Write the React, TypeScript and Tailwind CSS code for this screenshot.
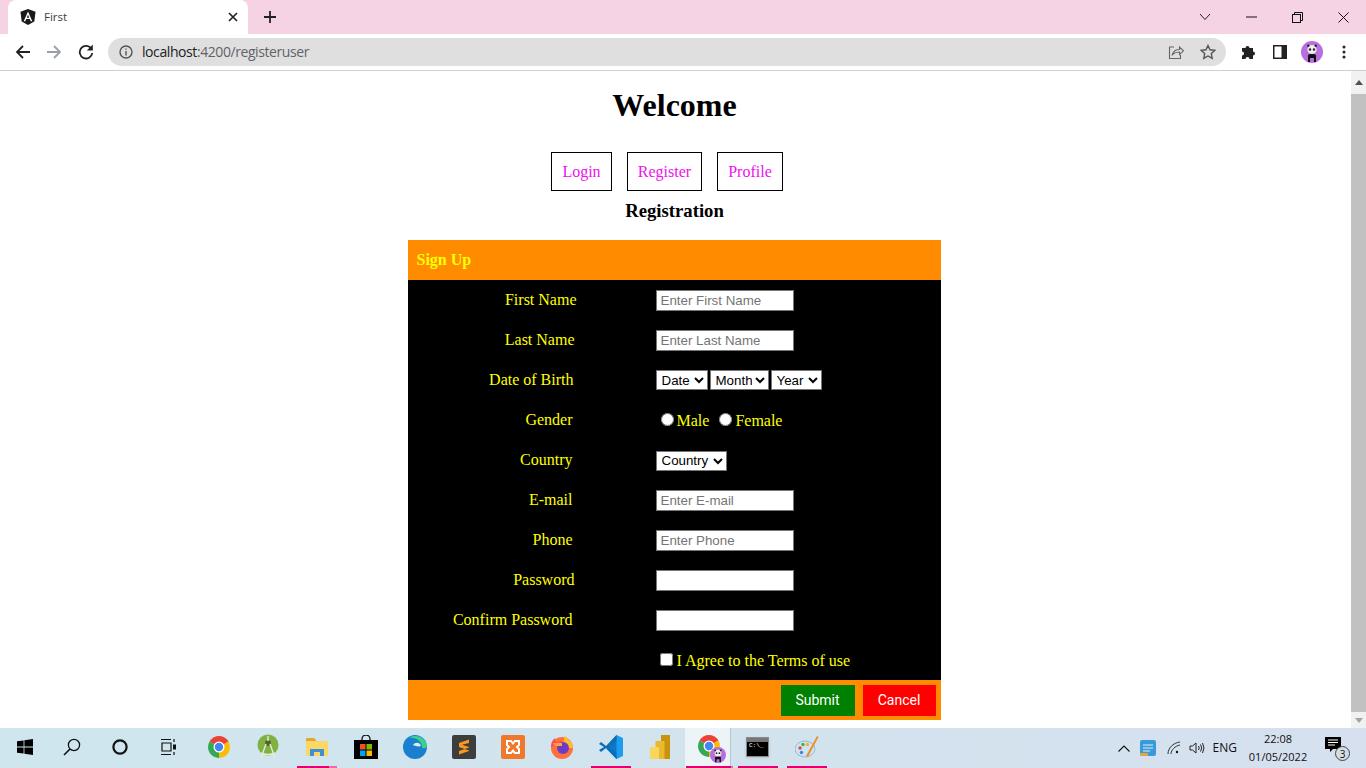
import React from 'react';

const ChromeLogo = ({ size = 24 }: { size?: number }) => (
  <svg width={size} height={size} viewBox="0 0 24 24">
    <path d="M12 12L2.5 6.5A11 11 0 0 1 21.5 6.5Z" fill="#ea4335" />
    <path d="M12 12L21.5 6.5A11 11 0 0 1 12 23Z" fill="#fbbc04" />
    <path d="M12 12L12 23A11 11 0 0 1 2.5 6.5Z" fill="#34a853" />
    <circle cx="12" cy="12" r="5.5" fill="#fff" />
    <circle cx="12" cy="12" r="4.2" fill="#4285f4" />
  </svg>
);

const Panda = ({ size = 22 }: { size?: number }) => (
  <svg width={size} height={size} viewBox="0 0 22 22">
    <circle cx="11" cy="11" r="11" fill="#b86ee0" />
    <path d="M7 21v-7q4-3 8 0v7h-2v-4h-4v4Z" fill="#111" />
    <circle cx="11" cy="8.5" r="4.6" fill="#eee" />
    <circle cx="9" cy="8.5" r="1.2" fill="#222" />
    <circle cx="13" cy="8.5" r="1.2" fill="#222" />
    <circle cx="7.2" cy="4.8" r="1.2" fill="#222" />
    <circle cx="14.8" cy="4.8" r="1.2" fill="#222" />
  </svg>
);

const taskbarApps: { icon: React.ReactNode; line?: string; active?: boolean; width?: string; shift?: string }[] = [
  {
    icon: (
      <svg width="16" height="16" viewBox="0 0 16 16" fill="#000">
        <path d="M0 2.3l6.6-.9v6.2H0ZM7.4 1.3L16 0v7.6H7.4ZM0 8.4h6.6v6.2L0 13.7ZM7.4 8.4H16V16l-8.6-1.3Z" />
      </svg>
    ),
    width: 'w-[47px] pl-[3px]',
  },
  {
    icon: (
      <svg width="18" height="18" viewBox="0 0 18 18" fill="none" stroke="#111" strokeWidth="1.3">
        <circle cx="11" cy="7" r="5.6" />
        <path d="M7 11l-6 6" strokeWidth="1.6" />
      </svg>
    ),
  },
  {
    icon: (
      <svg width="18" height="18" viewBox="0 0 18 18" fill="none" stroke="#111" strokeWidth="2.2">
        <circle cx="9" cy="9" r="6.6" />
      </svg>
    ),
    shift: 'pr-[2px]',
  },
  {
    icon: (
      <svg width="18" height="18" viewBox="0 0 18 18" fill="none" stroke="#111" strokeWidth="1.2">
        <path d="M1 1.500h10M1 16.500h10M2 5h9v8H2ZM14 1v3M14 14v3" />
        <rect x="13" y="6.500" width="3" height="5" fill="#111" stroke="none" />
      </svg>
    ),
    shift: 'pr-[2px]',
  },
  { icon: <ChromeLogo /> },
  {
    icon: (
      <svg width="24" height="26" viewBox="0 0 24 26">
        <circle cx="12" cy="11" r="10.500" fill="#7fb241" />
        <circle cx="12" cy="9" r="3" fill="#55632f" />
        <path d="M12 2v5M10 10L5 24M14 10l5 14M5 19q7 3 14 0" stroke="#e4ecd8" strokeWidth="1.400" fill="none" />
      </svg>
    ),
  },
  {
    icon: (
      <svg width="22" height="20" viewBox="0 0 22 20">
        <path d="M0 2a1 1 0 0 1 1-1h7l2 2v3H0Z" fill="#e3a72c" />
        <rect y="4" width="22" height="15" rx="1" fill="#fbd765" />
        <path d="M4 19v-7h14v7h-4v-4H8v4Z" fill="#3f8fd8" />
      </svg>
    ),
    line: 'w-[40px] bg-[linear-gradient(to_right,#e3006e_80%,#f06aa8_80%)]',
  },
  {
    icon: (
      <svg width="24" height="24" viewBox="0 0 24 24">
        <path d="M8 6V4a4 4 0 0 1 8 0v2" fill="none" stroke="#111" strokeWidth="1.300" />
        <rect y="5" width="24" height="19" fill="#000" />
        <rect x="6" y="9" width="5.500" height="5.500" fill="#f25022" />
        <rect x="12.500" y="9" width="5.500" height="5.500" fill="#7fba00" />
        <rect x="6" y="15.500" width="5.500" height="5.500" fill="#00a4ef" />
        <rect x="12.500" y="15.500" width="5.500" height="5.500" fill="#ffb900" />
      </svg>
    ),
  },
  {
    icon: (
      <svg width="24" height="24" viewBox="0 0 24 24">
        <circle cx="12" cy="12" r="12" fill="#1b7fd0" />
        <path d="M10 10c2-3 7-3 8 1-2 1-6 0-8-1Z" fill="#d7f0e4" />
        <path d="M6 3c6-4 15-2 18 7 0 2-1 4-5 3 1-7-7-11-13-10Z" fill="#3fd08a" />
      </svg>
    ),
  },
  {
    icon: (
      <svg width="24" height="24" viewBox="0 0 24 24">
        <rect width="24" height="24" rx="2" fill="#3d3d3d" />
        <path d="M17 4.500L7 8v4l10 3.500V12L10 9.800 17 8ZM7 12.500l10-.5M7 16l10-3.500V16L7 19.500Z" fill="#f79a1e" />
      </svg>
    ),
  },
  {
    icon: (
      <svg width="24" height="24" viewBox="0 0 24 24">
        <rect width="24" height="24" rx="2" fill="#f0782d" />
        <path d="M6 6h4l2 2.500L14 6h4v4l-2 2 2 2v4h-4l-2-2.500L10 18H6v-4l2-2-2-2Z" fill="none" stroke="#fff" strokeWidth="2" />
      </svg>
    ),
  },
  {
    icon: (
      <svg width="24" height="24" viewBox="0 0 24 24">
        <circle cx="12" cy="13" r="11" fill="#ff7139" />
        <path d="M15 0c1 4 8 6 8 13H12Z" fill="#ffbd2e" />
        <path d="M1 12C1 6 4 4 5 3l1 4 6-1-3 4Z" fill="#ff4f5e" />
        <circle cx="13" cy="13" r="6" fill="#6e3bc8" />
        <path d="M3 8h9v3H5Z" fill="#ffa436" />
      </svg>
    ),
  },
  {
    icon: (
      <svg width="24" height="24" viewBox="0 0 24 24">
        <path d="M17.500 0L24 3v18l-6.500 3L7 13.500l4-1.500Z" fill="#1f9cf0" />
        <path d="M17.500 0v24L7 12Z" fill="#0e78c4" />
        <path d="M2 7l-2 2 5 3-5 3 2 2 5-4 10.500 11V18L10 12l7.500-6V0L7 11Z" fill="#0a6fb8" />
      </svg>
    ),
    line: 'w-[40px] bg-[#e3006e]',
  },
  {
    icon: (
      <svg width="20" height="24" viewBox="0 0 20 24">
        <rect x="11" width="9" height="24" fill="#c99310" />
        <rect x="5.500" y="6" width="9" height="18" fill="#eab92d" />
        <rect y="12" width="9" height="12" fill="#f6d95c" />
      </svg>
    ),
  },
  {
    icon: (
      <div className="relative w-[26px] h-[26px]">
        <ChromeLogo size={24} />
        <div className="absolute right-[-3px] bottom-[-3px] rounded-full">
          <Panda size={16} />
        </div>
      </div>
    ),
    line: 'w-full bg-[linear-gradient(to_right,#e3006e_45px,#f06aa8_45px)]',
    active: true,
    width: 'w-[48px] ml-[1px] pl-[1px]',
  },
  {
    icon: (
      <div className="w-[23px] h-[20px] bg-black border border-[#8a8a8a] shadow-sm flex flex-col">
        <div className="h-[4px] bg-[#777]" />
        <div className="text-[6px] leading-[8px] text-white font-['Liberation_Mono',monospace] pl-[2px]">C:\_</div>
      </div>
    ),
    line: 'w-[40px] bg-[#e3006e]',
  },
  {
    icon: (
      <svg width="24" height="24" viewBox="0 0 24 24">
        <ellipse cx="10" cy="14" rx="10" ry="8" fill="#cfe3f2" stroke="#8aaec9" strokeWidth="0.800" />
        <circle cx="5" cy="13" r="1.700" fill="#e2483b" />
        <circle cx="8" cy="9.500" r="1.700" fill="#4aae4a" />
        <circle cx="12.500" cy="9.500" r="1.700" fill="#f0b429" />
        <circle cx="6.500" cy="17.500" r="1.700" fill="#3d86d8" />
        <path d="M22 1l1.500 1L13 22l-2-1Z" fill="#e8912c" />
      </svg>
    ),
    line: 'w-[40px] bg-[#e3006e]',
  },
];

const rows = [
  { label: 'First Name', pad: 'pr-0', type: 'text', placeholder: 'Enter First Name' },
  { label: 'Last Name', pad: 'pr-[2px]', type: 'text', placeholder: 'Enter Last Name' },
  { label: 'Date of Birth', pad: 'pr-[3px]', type: 'dob' },
  { label: 'Gender', pad: 'pr-[4px]', type: 'gender' },
  { label: 'Country', pad: 'pr-[4px]', type: 'country' },
  { label: 'E-mail', pad: 'pr-[4px]', type: 'text', placeholder: 'Enter E-mail' },
  { label: 'Phone', pad: 'pr-[4px]', type: 'text', placeholder: 'Enter Phone' },
  { label: 'Password', pad: 'pr-[2px]', type: 'password' },
  { label: 'Confirm Password', pad: 'pr-[4px]', type: 'password' },
];

const navItems = [
  { label: 'Login', width: 'w-[61px]' },
  { label: 'Register', width: 'w-[75px]' },
  { label: 'Profile', width: 'w-[66px]' },
];

const inputClass =
  "w-[138px] h-[21px] bg-white border border-[#767676] px-[4px] text-[13.33px] text-black font-['Liberation_Sans',Arial,sans-serif] placeholder:text-[#757575]";
const selectClass =
  "h-[20px] bg-white border border-[#767676] pl-[1px] text-[13.33px] text-black font-['Liberation_Sans',Arial,sans-serif]";

const Control = ({ row }: { row: (typeof rows)[number] }) => {
  if (row.type === 'text' || row.type === 'password') {
    return <input type={row.type} placeholder={row.placeholder} className={inputClass} />;
  }
  if (row.type === 'dob') {
    return (
      <div className="flex gap-[2px]">
        <select className={`${selectClass} w-[52px]`}><option>Date</option></select>
        <select className={`${selectClass} w-[59px]`}><option>Month</option></select>
        <select className={`${selectClass} w-[51px]`}><option>Year</option></select>
      </div>
    );
  }
  if (row.type === 'country') {
    return <select className={`${selectClass} w-[71px]`}><option>Country</option></select>;
  }
  return (
    <div className="flex items-center pl-[5px] text-[16px] text-[#ffff00]">
      <input type="radio" name="gender" className="w-[13px] h-[13px] mb-[2px]" />
      <span className="ml-[3px] mt-[1px]">Male</span>
      <input type="radio" name="gender" className="w-[13px] h-[13px] mb-[2px] ml-[10px]" />
      <span className="ml-[3px] mt-[1px]">Female</span>
    </div>
  );
};

export default function App() {
  return (
    <div className="w-[1366px] h-[768px] flex flex-col overflow-hidden bg-white font-['Liberation_Serif',serif]">
      {/* Tab strip */}
      <div className="h-[34px] flex bg-[#f5d3e5] pl-[8px] shrink-0">
        <div className="w-[240px] h-[34px] bg-white rounded-t-[8px] flex items-center pl-[12px] pr-[10px]">
          <svg width="16" height="16" viewBox="0 0 16 16">
            <path d="M8 0L.5 2.700l1.200 9.900L8 16l6.300-3.400 1.200-9.900Z" fill="#1a1a1a" />
            <path d="M8 2.500L3.700 12.200h1.600l.9-2.200h3.600l.9 2.200h1.600ZM6.800 8.700L8 5.800l1.200 2.900Z" fill="#fff" />
          </svg>
          <span className="ml-[8px] flex-1 text-[11.5px] text-[#3c4043] font-['Open_Sans',sans-serif]">First</span>
          <svg width="10" height="10" viewBox="0 0 10 10" stroke="#222" strokeWidth="1.700">
            <path d="M1 1l8 8M9 1l-8 8" />
          </svg>
        </div>
        <div className="w-[44px] flex items-center justify-center">
          <svg width="14" height="14" viewBox="0 0 14 14" stroke="#222" strokeWidth="1.800">
            <path d="M7 1v12M1 7h12" />
          </svg>
        </div>
        <div className="flex-1 flex items-center justify-end">
          <div className="w-[46px] flex justify-center">
            <svg width="12" height="8" viewBox="0 0 12 8" fill="none" stroke="#222"><path d="M1 1l5 5.500L11 1" /></svg>
          </div>
          <div className="w-[46px] flex justify-center">
            <svg width="11" height="2" viewBox="0 0 11 2"><rect width="11" height="1" y="0.500" fill="#111" /></svg>
          </div>
          <div className="w-[46px] flex justify-center">
            <svg width="11" height="11" viewBox="0 0 11 11" fill="none" stroke="#111">
              <rect x="0.500" y="2.500" width="8" height="8" />
              <path d="M2.500 2.500v-2h8v8h-2" />
            </svg>
          </div>
          <div className="w-[46px] flex justify-center">
            <svg width="11" height="11" viewBox="0 0 11 11" stroke="#111"><path d="M.5.5l10 10M10.500.5l-10 10" /></svg>
          </div>
        </div>
      </div>

      {/* Toolbar */}
      <div className="h-[37px] shrink-0 flex items-center bg-white border-b border-[#cfcfcf] pb-[1px]">
        <div className="w-[108px] flex items-center pl-[15px]">
          <svg width="15" height="14" viewBox="0 0 15 14" fill="none" stroke="#222" strokeWidth="1.800">
            <path d="M15 7H2M8 1L2 7l6 6" />
          </svg>
          <svg className="ml-[17px]" width="15" height="14" viewBox="0 0 15 14" fill="none" stroke="#9aa0a6" strokeWidth="1.800">
            <path d="M0 7h13M7 1l6 6-6 6" />
          </svg>
          <svg className="ml-[16px]" width="16" height="16" viewBox="0 0 16 16" fill="none" stroke="#222" strokeWidth="1.800">
            <path d="M13.500 5A6.300 6.300 0 1 0 14.300 9" />
            <path d="M14.800 .5v6h-6Z" fill="#222" strokeWidth="0" />
          </svg>
        </div>
        <div className="w-[1118px] h-[28px] rounded-full bg-[#dfdfdf] flex items-center pl-[11px] pr-[10px]">
          <svg width="14" height="14" viewBox="0 0 14 14" fill="none" stroke="#555" strokeWidth="1.400">
            <circle cx="7" cy="7" r="6" />
            <path d="M7 6v4.500M7 3.500v1.300" />
          </svg>
          <span className="ml-[9px] flex-1 text-[14px] font-['Open_Sans',sans-serif] tracking-[-0.42px] text-[#5f6368]">
            <span className="text-[#202124]">localhost</span>:4200/registeruser
          </span>
          <svg width="16" height="16" viewBox="0 0 16 16" fill="none" stroke="#666" strokeWidth="1.100">
            <path d="M6 3H1.500v11.500h11V11" />
            <path d="M4.500 10.500c1-4 4-5 7-5V3l4 3.800-4 3.700V8c-3 0-5 .5-7 2.500Z" />
          </svg>
          <svg className="ml-[16px]" width="16" height="16" viewBox="0 0 16 16" fill="none" stroke="#555" strokeWidth="1.400">
            <path d="M8 1.500l2 4.300 4.700.6-3.400 3.200.9 4.700L8 12l-4.200 2.300.9-4.700L1.300 6.400 6 5.800Z" />
          </svg>
        </div>
        <div className="flex-1 flex items-center pl-[15px]">
          <svg width="16" height="16" viewBox="0 0 16 16" fill="#222">
            <path d="M1 4h3.500a2 2 0 1 1 4 0H12v3.500a2 2 0 1 1 0 4V15H8.500a2 2 0 1 0-4 0H1v-3.500a2 2 0 1 0 0-4Z" />
          </svg>
          <svg className="ml-[16px]" width="14" height="14" viewBox="0 0 14 14">
            <rect width="14" height="14" fill="#222" />
            <rect x="1.500" y="1.500" width="7" height="11" fill="#fff" />
          </svg>
          <div className="ml-[14px] flex"><Panda /></div>
          <svg className="ml-[19px]" width="4" height="14" viewBox="0 0 4 14" fill="#222">
            <circle cx="2" cy="2" r="1.500" />
            <circle cx="2" cy="7" r="1.500" />
            <circle cx="2" cy="12" r="1.500" />
          </svg>
        </div>
      </div>

      {/* Page */}
      <div className="flex-1 min-h-0 flex">
        <main className="w-[1351px] flex flex-col items-center overflow-hidden text-black">
          <h1 className="mt-[16px] mr-[2px] text-[32px] leading-[37px] font-bold">Welcome</h1>
          <nav className="mt-[28px] flex gap-[15px] pr-[17px]">
            {navItems.map(item => (
              <a key={item.label} className={`${item.width} h-[39px] flex items-center justify-center border border-black text-[16px] text-[#ee11ee]`}>
                {item.label}
              </a>
            ))}
          </nav>
          <h3 className="mt-[9px] mr-[2px] text-[18.72px] leading-[22px] font-bold">Registration</h3>

          <div className="mt-[18px] w-[533px] shrink-0 mr-[3px]">
            <div className="h-[40px] bg-[#ff8c00] flex items-center pl-[9px] text-[16px] font-bold text-[#ffff00]">Sign Up</div>
            <div className="bg-black text-[#ffff00] text-[16px]">
              {rows.map(row => (
                <div key={row.label} className="h-[40px] flex items-center">
                  <label className={`w-[169px] text-right ${row.pad}`}>{row.label}</label>
                  <div className="ml-[79px]">
                    <Control row={row} />
                  </div>
                </div>
              ))}
              <div className="h-[40px] flex items-center pl-[252px] pt-[1px]">
                <input type="checkbox" className="w-[13px] h-[13px] mb-[2px]" />
                <span className="ml-[4px]">I Agree to the Terms of use</span>
              </div>
            </div>
            <div className="h-[40px] bg-[#ff8c00] flex items-center justify-end gap-[8px] pr-[5px] text-[14px] font-normal text-white font-['Roboto',sans-serif]">
              <button className="w-[74px] h-[31px] bg-[#008000]">Submit</button>
              <button className="w-[73px] h-[31px] bg-[#ff0000]">Cancel</button>
            </div>
          </div>
        </main>

        {/* Scrollbar */}
        <div className="w-[15px] bg-[#f1f1f1] flex flex-col items-center">
          <div className="h-[23px] w-full flex items-center justify-center">
            <svg width="8" height="5" viewBox="0 0 8 5"><path d="M4 0l4 5H0Z" fill="#505050" /></svg>
          </div>
          <div className="flex-1 w-full bg-[#c1c1c1]" />
          <div className="h-[16px] w-full flex items-center justify-center">
            <svg width="8" height="5" viewBox="0 0 8 5"><path d="M4 5l4-5H0Z" fill="#a3a3a3" /></svg>
          </div>
        </div>
      </div>

      {/* Windows taskbar */}
      <div className="h-[40px] shrink-0 flex bg-[linear-gradient(to_right,#cfe6ee,#d3e3ee_60%,#d6e0ef)] font-['Open_Sans',sans-serif]">
        {taskbarApps.map((app, i) => (
          <div
            key={i}
            className={`${app.width ?? 'w-[49px]'} ${app.shift ?? ''} h-full flex flex-col items-center ${app.active ? 'bg-[linear-gradient(to_right,#edf4f8_45px,#b9c6d2_45px,#b9c6d2_46px,transparent_46px)]' : ''}`}
          >
            <div className="flex-1 flex items-center justify-center">{app.icon}</div>
            <div className={`h-[2px] ${app.line ?? 'w-[40px]'}`} />
          </div>
        ))}
        <div className="flex-1 flex items-center justify-end text-[#111]">
          <svg width="12" height="7" viewBox="0 0 12 7" fill="none" stroke="#111" strokeWidth="1.100">
            <path d="M.5 6.500L6 1l5.500 5.500" />
          </svg>
          <svg className="ml-[10px]" width="16" height="16" viewBox="0 0 16 16">
            <rect width="16" height="16" rx="2" fill="#3b9bd9" />
            <path d="M3 5h10M3 8h10M3 11h7" stroke="#d9f0fb" />
            <path d="M0 13h8v3H2a2 2 0 0 1-2-2Z" fill="#e8a33c" />
          </svg>
          <svg className="ml-[11px]" width="14" height="14" viewBox="0 0 14 14" fill="none" stroke="#333" strokeWidth="1">
            <path d="M1 13C1 7 6 2 13 1M4 13c0-4 4-8 9-9" />
            <circle cx="10" cy="11" r="1.200" fill="#111" stroke="none" />
          </svg>
          <svg className="ml-[8px]" width="16" height="14" viewBox="0 0 16 14" fill="none" stroke="#222" strokeWidth="1">
            <path d="M1 5h2.500L7 2v10L3.500 9H1ZM9.500 5q1.500 2 0 4M11.500 3.500q2.500 3.500 0 7M13.500 2q3 5 0 10" />
          </svg>
          <span className="ml-[8px] text-[12px]">ENG</span>
          <div className="ml-[11px] w-[60px] text-center text-[11px] leading-[18px]">
            <div>22:08</div>
            <div>01/05/2022</div>
          </div>
          <div className="ml-[17px] mr-[19px] relative w-[22px] h-[22px]">
            <svg width="16" height="16" viewBox="0 0 16 16" fill="#000">
              <path d="M0 0h16v12H8l-3 3v-3H0Z" />
              <path d="M3 3h10M3 5.500h10M3 8h7" stroke="#fff" />
            </svg>
            <div className="absolute right-[-3px] bottom-[-2px] w-[15px] h-[15px] rounded-full bg-[#d3dde6] border border-[#444] flex items-center justify-center text-[10px] leading-none">3</div>
          </div>
        </div>
      </div>
    </div>
  );
}
